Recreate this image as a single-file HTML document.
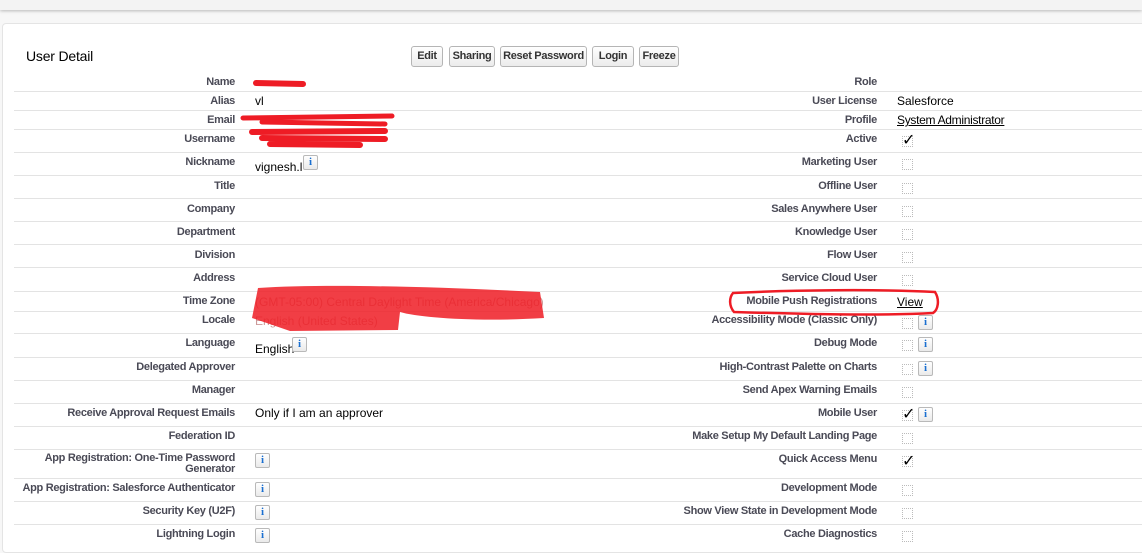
<!DOCTYPE html>
<html><head><meta charset="utf-8"><style>
*{margin:0;padding:0;box-sizing:border-box}
body{width:1142px;height:544px;overflow:hidden;background:#f7f7f7;font-family:"Liberation Sans",Arial,sans-serif;position:relative}
.top{position:absolute;left:0;top:0;width:1142px;height:10px;background:#f3f3f3;box-shadow:0 1px 3px rgba(0,0,0,.25)}
.panel{position:absolute;left:2px;top:23px;width:1150px;height:530px;background:#fff;border:1px solid #e4e4e4;border-radius:4px}
h2{position:absolute;left:26px;top:48px;font-size:14px;font-weight:normal;color:#000;letter-spacing:-.2px}
.btn{position:absolute;top:46px;height:21px;border:1px solid #b5b5b5;border-radius:3px;background:linear-gradient(#fff,#ececec);font-size:11px;font-weight:bold;color:#333;text-align:center;line-height:19px;letter-spacing:-.3px}
.line{position:absolute;left:14px;width:1128px;height:1px;background:#e3e3e3}
.l{position:absolute;text-align:right;font-size:11px;font-weight:bold;color:#4a4a56;line-height:13px;letter-spacing:-.3px}
.v{position:absolute;font-size:12px;color:#000;line-height:14px}
.cb{position:absolute;width:11px;height:11px;border:1px dotted #bbb}
.i{position:absolute;width:15px;height:15px;border:1px solid #b9b9b9;border-radius:2px;background:linear-gradient(#fff,#eaeaea);color:#1a6fd0;font:bold 11px "Liberation Serif",serif;text-align:center;line-height:13px}
.ck{position:absolute;font-size:16px;color:#000;line-height:14px;font-family:"DejaVu Sans",sans-serif}
</style></head><body>
<div class="top"></div>
<div class="panel"></div>
<h2>User Detail</h2>
<div class="btn" style="left:411px;width:32px">Edit</div>
<div class="btn" style="left:449px;width:46px">Sharing</div>
<div class="btn" style="left:500px;width:87px">Reset Password</div>
<div class="btn" style="left:592px;width:42px">Login</div>
<div class="btn" style="left:639px;width:40px">Freeze</div>

<div class="line" style="top:91px"></div><div class="line" style="top:110px"></div><div class="line" style="top:129px"></div><div class="line" style="top:152px"></div><div class="line" style="top:175px"></div><div class="line" style="top:198px"></div><div class="line" style="top:221px"></div><div class="line" style="top:244px"></div><div class="line" style="top:267px"></div><div class="line" style="top:291px"></div><div class="line" style="top:311px"></div><div class="line" style="top:333px"></div><div class="line" style="top:357px"></div><div class="line" style="top:380px"></div><div class="line" style="top:403px"></div><div class="line" style="top:426px"></div><div class="line" style="top:449px"></div><div class="line" style="top:478px"></div><div class="line" style="top:501px"></div><div class="line" style="top:524px"></div>

<div class="l" style="left:0;width:235px;top:76px">Name</div>
<div class="l" style="left:0;width:235px;top:95px">Alias</div>
<div class="l" style="left:0;width:235px;top:114px">Email</div>
<div class="l" style="left:0;width:235px;top:133px">Username</div>
<div class="l" style="left:0;width:235px;top:156px">Nickname</div>
<div class="l" style="left:0;width:235px;top:180px">Title</div>
<div class="l" style="left:0;width:235px;top:203px">Company</div>
<div class="l" style="left:0;width:235px;top:226px">Department</div>
<div class="l" style="left:0;width:235px;top:249px">Division</div>
<div class="l" style="left:0;width:235px;top:272px">Address</div>
<div class="l" style="left:0;width:235px;top:295px">Time Zone</div>
<div class="l" style="left:0;width:235px;top:314px">Locale</div>
<div class="l" style="left:0;width:235px;top:337px">Language</div>
<div class="l" style="left:0;width:235px;top:361px">Delegated Approver</div>
<div class="l" style="left:0;width:235px;top:384px">Manager</div>
<div class="l" style="left:0;width:235px;top:407px">Receive Approval Request Emails</div>
<div class="l" style="left:0;width:235px;top:430px">Federation ID</div>
<div class="l" style="left:0;width:235px;top:453px;line-height:11px">App Registration: One-Time Password<br>Generator</div>
<div class="l" style="left:0;width:235px;top:482px">App Registration: Salesforce Authenticator</div>
<div class="l" style="left:0;width:235px;top:505px">Security Key (U2F)</div>
<div class="l" style="left:0;width:235px;top:528px">Lightning Login</div>

<div class="v" style="left:255px;top:94px">vl</div>
<div class="v" style="left:255px;top:160px">vignesh.l</div><div class="i" style="left:303px;top:155px">i</div>
<div class="v" style="left:255px;top:295px;color:#c99">(GMT-05:00) Central Daylight Time (America/Chicago)</div>
<div class="v" style="left:255px;top:314px;color:#c99">English (United States)</div>
<div class="v" style="left:255px;top:342px">English</div><div class="i" style="left:292px;top:337px">i</div>
<div class="v" style="left:255px;top:406px">Only if I am an approver</div>
<div class="i" style="left:255px;top:453px">i</div>
<div class="i" style="left:255px;top:482px">i</div>
<div class="i" style="left:255px;top:505px">i</div>
<div class="i" style="left:255px;top:528px">i</div>

<div class="l" style="left:500px;width:377px;top:76px">Role</div>
<div class="l" style="left:500px;width:377px;top:95px">User License</div>
<div class="l" style="left:500px;width:377px;top:114px">Profile</div>
<div class="l" style="left:500px;width:377px;top:133px">Active</div>
<div class="l" style="left:500px;width:377px;top:156px">Marketing User</div>
<div class="l" style="left:500px;width:377px;top:180px">Offline User</div>
<div class="l" style="left:500px;width:377px;top:203px">Sales Anywhere User</div>
<div class="l" style="left:500px;width:377px;top:226px">Knowledge User</div>
<div class="l" style="left:500px;width:377px;top:249px">Flow User</div>
<div class="l" style="left:500px;width:377px;top:272px">Service Cloud User</div>
<div class="l" style="left:500px;width:377px;top:295px">Mobile Push Registrations</div>
<div class="l" style="left:500px;width:377px;top:314px">Accessibility Mode (Classic Only)</div>
<div class="l" style="left:500px;width:377px;top:337px">Debug Mode</div>
<div class="l" style="left:500px;width:377px;top:361px">High-Contrast Palette on Charts</div>
<div class="l" style="left:500px;width:377px;top:384px">Send Apex Warning Emails</div>
<div class="l" style="left:500px;width:377px;top:407px">Mobile User</div>
<div class="l" style="left:500px;width:377px;top:430px">Make Setup My Default Landing Page</div>
<div class="l" style="left:500px;width:377px;top:453px">Quick Access Menu</div>
<div class="l" style="left:500px;width:377px;top:482px">Development Mode</div>
<div class="l" style="left:500px;width:377px;top:505px">Show View State in Development Mode</div>
<div class="l" style="left:500px;width:377px;top:528px">Cache Diagnostics</div>

<div class="v" style="left:897px;top:94px">Salesforce</div>
<div class="v" style="left:897px;top:113px;text-decoration:underline;letter-spacing:-.3px">System Administrator</div>
<div class="cb" style="left:902px;top:136px"></div><div class="ck" style="left:902px;top:133px">✓</div>
<div class="cb" style="left:902px;top:159px"></div>
<div class="cb" style="left:902px;top:183px"></div>
<div class="cb" style="left:902px;top:206px"></div>
<div class="cb" style="left:902px;top:229px"></div>
<div class="cb" style="left:902px;top:252px"></div>
<div class="cb" style="left:902px;top:275px"></div>
<div class="v" style="left:897px;top:295px;text-decoration:underline">View</div>
<div class="cb" style="left:902px;top:318px"></div><div class="i" style="left:918px;top:315px">i</div>
<div class="cb" style="left:902px;top:340px"></div><div class="i" style="left:918px;top:337px">i</div>
<div class="cb" style="left:902px;top:364px"></div><div class="i" style="left:918px;top:361px">i</div>
<div class="cb" style="left:902px;top:387px"></div>
<div class="cb" style="left:902px;top:410px"></div><div class="ck" style="left:902px;top:407px">✓</div><div class="i" style="left:918px;top:407px">i</div>
<div class="cb" style="left:902px;top:433px"></div>
<div class="cb" style="left:902px;top:456px"></div><div class="ck" style="left:902px;top:454px">✓</div>
<div class="cb" style="left:902px;top:485px"></div>
<div class="cb" style="left:902px;top:508px"></div>
<div class="cb" style="left:902px;top:531px"></div>

<svg style="position:absolute;left:0;top:0" width="1142" height="544">
<g stroke="#ee1c25" stroke-linecap="round" fill="none">
<path d="M256 83 L303 84" stroke-width="6"/>
<path d="M243 118 L392 116 M262 122 L385 124" stroke-width="5"/>
<path d="M252 132 L385 131 M262 138 L385 139 M270 144 L360 145" stroke-width="6"/>
</g>
<g fill="#ee1c25" fill-opacity=".85">
<path d="M258 288 C320 284 420 286 540 292 L544 318 C480 322 420 318 400 312 L398 330 L290 331 L252 318 Z"/>
</g>
<path d="M733 293 C790 290 880 289 935 292 C940 300 938 310 933 313 C880 316 800 314 734 312 C729 306 729 298 733 293 Z" fill="none" stroke="#ee1c25" stroke-width="2.5"/>
</svg>
</body></html>
